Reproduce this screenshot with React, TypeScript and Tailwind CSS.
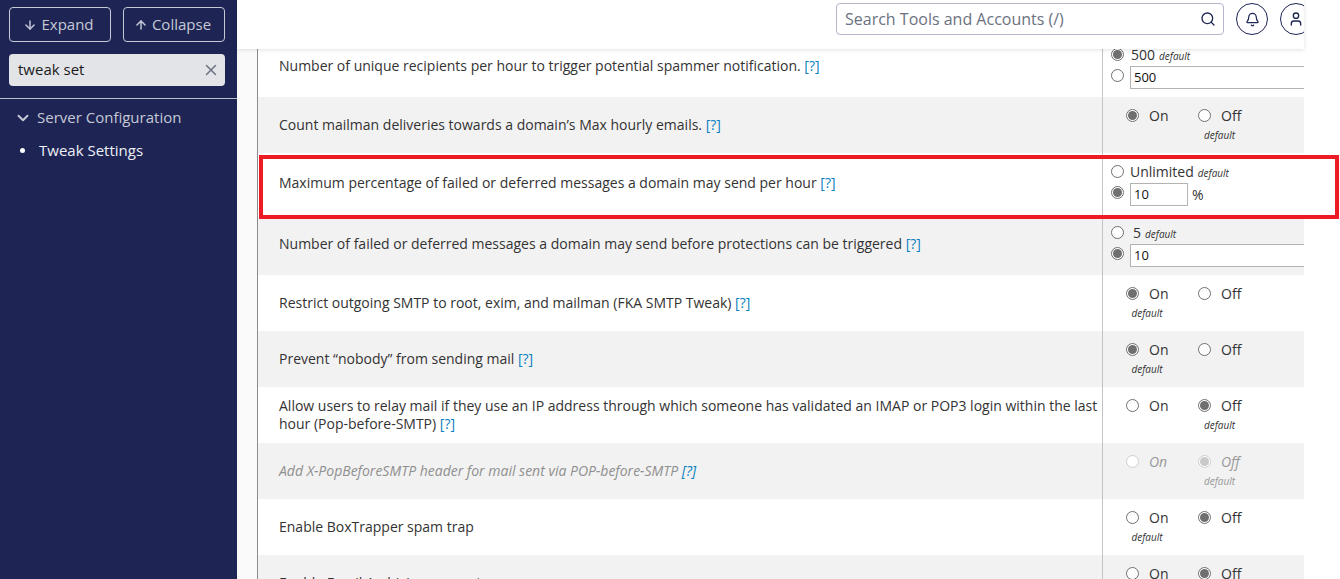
import { ArrowDown, ArrowUp, Bell, ChevronDown, Search, User, X } from "lucide-react"
import type { ReactNode } from "react"

function Radio({ checked, disabled, className = "" }: { checked?: boolean; disabled?: boolean; className?: string }) {
  return (
    <span
      className={`flex h-[13px] w-[13px] shrink-0 items-center justify-center rounded-full border bg-white ${
        disabled ? "border-[#cfcfcf]" : "border-[#6f6f6f]"
      } ${className}`}
    >
      {checked && <span className={`h-[9px] w-[9px] rounded-full ${disabled ? "bg-[#c9c9c9]" : "bg-[#6f6f6f]"}`} />}
    </span>
  )
}

function Def({ disabled }: { disabled?: boolean }) {
  return <span className={`text-[10px] italic ${disabled ? "text-[#999]" : "text-[#333]"}`}>default</span>
}

function Help({ disabled }: { disabled?: boolean }) {
  return <span className={`text-[#0a7fc2] ${disabled ? "italic" : ""}`}>[?]</span>
}

function Toggle({ value, def, disabled }: { value: "on" | "off"; def: "on" | "off"; disabled?: boolean }) {
  const opt = (key: "on" | "off", label: string, width: string) => (
    <div className={`flex flex-col items-center ${width}`}>
      <div className="flex h-[20px] w-full items-center gap-[10px]">
        <Radio checked={value === key} disabled={disabled} />
        <span className={disabled ? "italic text-[#999]" : "text-[#333]"}>{label}</span>
      </div>
      <div className="h-[18px] leading-[18px]">{def === key && <Def disabled={disabled} />}</div>
    </div>
  )
  return (
    <div className="flex pl-[23px] pt-[8px]">
      <div className="w-[72px]">{opt("on", "On", "w-[42px]")}</div>
      {opt("off", "Off", "w-[43px]")}
    </div>
  )
}

function Row({
  children,
  control,
  gray,
  height,
  muted,
  textClass = "",
}: {
  children: ReactNode
  control: ReactNode
  gray?: boolean
  height: string
  muted?: boolean
  textClass?: string
}) {
  return (
    <div className={`flex ${height} ${gray ? "bg-[#f2f2f2]" : "bg-white"}`}>
      <div
        className={`flex w-[844px] items-center pl-[21px] pr-1 leading-[18px] ${textClass} ${
          muted ? "italic text-[#8f8f8f]" : "text-[#333]"
        }`}
      >
        <p>{children}</p>
      </div>
      <div className="w-[202px] overflow-hidden border-l border-[#c4c4c4]">{control}</div>
    </div>
  )
}

// radio + number field line, the radio sits a bit above the field's middle
function InputLine({ checked, value, width, unit }: { checked?: boolean; value: string; width: string; unit?: string }) {
  return (
    <div className="mt-[3px] flex items-start gap-[6px]">
      <Radio checked={checked} className="mt-[3px]" />
      <span className={`flex h-[23px] shrink-0 items-center border border-[#b3b3b3] bg-white pl-[3px] text-[13px] text-[#111] ${width}`}>
        {value}
      </span>
      {unit && <span className="-ml-[2px] leading-[23px] text-[#333]">{unit}</span>}
    </div>
  )
}

function LabelLine({ checked, label, labelClass = "" }: { checked?: boolean; label: string; labelClass?: string }) {
  return (
    <div className="flex h-[18px] items-center gap-[6px]">
      <Radio checked={checked} />
      <span className={`text-[#333] ${labelClass}`}>{label}</span>
      <span className="-ml-[2px] pt-[3px] leading-[15px]">
        <Def />
      </span>
    </div>
  )
}

export default function App() {
  return (
    <div className="relative h-[579px] w-[1340px] overflow-hidden bg-white font-['Open_Sans',sans-serif] text-[14px]">
      <div className="flex h-full w-[1304px]">
        <aside className="w-[237px] shrink-0 bg-[#1e2555] text-[#c6c9d6]">
          <div className="flex gap-3 pl-[9px] pt-[7px]">
            <button className="flex h-[35px] w-[102px] items-center justify-center gap-[4px] rounded-[4px] border border-[#c6c9d6] pr-[3px] text-[15px]">
              <ArrowDown size={14} strokeWidth={2.5} />
              Expand
            </button>
            <button className="flex h-[35px] w-[102px] items-center justify-center gap-[4px] rounded-[4px] border border-[#c6c9d6] pr-[3px] text-[15px]">
              <ArrowUp size={14} strokeWidth={2.5} />
              Collapse
            </button>
          </div>
          <div className="ml-[9px] mt-[12px] flex h-[32px] w-[216px] items-center justify-between rounded-[4px] bg-[#e2e4e8] pl-[9px] pr-[5px] text-[15px] text-[#1b1b1b]">
            <span className="pb-[2px]">tweak set</span>
            <X size={18} className="text-[#6b7280]" />
          </div>
          <div className="mt-[12px] border-t border-[#b9bcc9]" />
          <div className="flex items-center gap-[5px] pl-[14px] pt-[9px] text-[15px] leading-[20px]">
            <ChevronDown size={18} strokeWidth={2.5} />
            <span className="-translate-y-[1px]">Server Configuration</span>
          </div>
          <div className="flex items-center gap-[14px] pl-[20px] pt-[12px] text-[15px] leading-[20px] text-[#eef0f6]">
            <span className="h-[5px] w-[5px] rounded-full bg-white" />
            Tweak Settings
          </div>
        </aside>

        <div className="flex min-w-0 flex-1 flex-col">
          <header className="relative z-10 flex h-[49px] shrink-0 gap-3 overflow-hidden bg-white pl-[599px] pt-[3px] shadow-[0_1px_4px_rgba(0,0,0,0.12)]">
            <div className="flex h-[32px] w-[388px] shrink-0 items-center justify-between rounded-[4px] border border-[#b5b5cc] pl-[8px] pr-[7px] text-[16px] text-[#6b7280]">
              Search Tools and Accounts (/)
              <Search size={16} className="text-[#1e2555]" />
            </div>
            <span className="flex h-[32px] w-[32px] shrink-0 items-center justify-center rounded-full border border-[#1e2555] text-[#1e2555]">
              <Bell size={15} />
            </span>
            <span className="flex h-[32px] w-[32px] shrink-0 items-center justify-center rounded-full border border-[#1e2555] text-[#1e2555]">
              <User size={16} />
            </span>
          </header>

          {/* page is scrolled, first row runs under the header */}
          <main className="-mt-[16px] flex min-h-0 flex-1 bg-[#fafafa] pl-[20px]">
            <div className="w-[1047px] border-l border-[#8c8c8c]">
              <Row
                height="h-[64px]"
                textClass="pt-[2px]"
                control={
                  <div className="pl-[8px] pt-[12px]">
                    <LabelLine checked label="500" labelClass="pl-[1px]" />
                    <InputLine value="500" width="w-[220px]" />
                  </div>
                }
              >
                Number of unique recipients per hour to trigger potential spammer notification. <Help />
              </Row>
              <Row gray height="h-[56px]" control={<Toggle value="on" def="off" />}>
                Count mailman deliveries towards a domain’s Max hourly emails. <Help />
              </Row>
              <Row
                height="h-[66px]"
                textClass="pb-[6px]"
                control={
                  <div className="pl-[8px] pt-[9px]">
                    <LabelLine label="Unlimited" />
                    <InputLine checked value="10" width="w-[58px]" unit="%" />
                  </div>
                }
              >
                Maximum percentage of failed or deferred messages a domain may send per hour <Help />
              </Row>
              <Row
                gray
                height="h-[56px]"
                textClass="pb-[6px]"
                control={
                  <div className="pl-[8px] pt-[4px]">
                    <LabelLine label="5" labelClass="pl-[3px]" />
                    <InputLine checked value="10" width="w-[220px]" />
                  </div>
                }
              >
                Number of failed or deferred messages a domain may send before protections can be triggered <Help />
              </Row>
              <Row height="h-[56px]" control={<Toggle value="on" def="on" />}>
                Restrict outgoing SMTP to root, exim, and mailman (FKA SMTP Tweak) <Help />
              </Row>
              <Row gray height="h-[56px]" control={<Toggle value="on" def="on" />}>
                Prevent “nobody” from sending mail <Help />
              </Row>
              <Row height="h-[56px]" control={<Toggle value="off" def="off" />}>
                Allow users to relay mail if they use an IP address through which someone has validated an IMAP or POP3 login within the last hour (Pop-before-SMTP) <Help />
              </Row>
              <Row gray muted height="h-[56px]" control={<Toggle value="off" def="off" disabled />}>
                Add X-PopBeforeSMTP header for mail sent via POP-before-SMTP <Help disabled />
              </Row>
              <Row height="h-[56px]" control={<Toggle value="off" def="on" />}>
                Enable BoxTrapper spam trap
              </Row>
              <Row gray height="h-[56px]" control={<Toggle value="off" def="on" />}>
                Enable Email Archiving support
              </Row>
            </div>
          </main>
        </div>
      </div>

      {/* red annotation box from the screenshot */}
      <div className="absolute left-[259px] top-[155px] z-20 h-[64px] w-[1080px] border-[4px] border-[#ed1c24]" />
    </div>
  )
}
